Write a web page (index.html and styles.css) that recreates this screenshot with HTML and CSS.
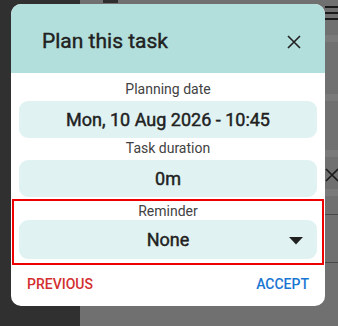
FILE: index.html
```html
<!DOCTYPE html>
<html lang="en">
<head>
    <meta charset="UTF-8">
    <meta name="viewport" content="width=device-width, initial-scale=1.0">
    <title>Plan this task</title>
    <link rel="stylesheet" href="styles.css">
</head>
<body>

<!-- Backdrop (dimmed app behind the dialog) -->
<div class="backdrop">
    <div class="side"></div>
    <div class="main">
        <div class="tab-mark"></div>
        <div class="menu-icon">
            <span></span><span></span><span></span>
        </div>
        <div class="band band-1"></div>
        <div class="band band-2"></div>
        <div class="band band-3"></div>
        <div class="band band-4"></div>
        <div class="line line-1"></div>
        <div class="line line-2"></div>
        <svg class="bg-close" width="14" height="14" viewBox="0 0 14 14">
            <path d="M1 1L13 13M13 1L1 13" stroke="#1a1a1a" stroke-width="1.6"/>
        </svg>
    </div>
</div>

<!-- Dialog -->
<div class="dialog">
    <div class="dialog-header">
        <h2>Plan this task</h2>
        <svg class="close" width="14" height="14" viewBox="0 0 14 14">
            <path d="M1 1L13 13M13 1L1 13" stroke="#212121" stroke-width="1.6"/>
        </svg>
    </div>

    <div class="dialog-body">
        <div class="field">
            <div class="label">Planning date</div>
            <div class="value">Mon, 10 Aug 2026 - 10:45</div>
        </div>

        <div class="field">
            <div class="label">Task duration</div>
            <div class="value">0m</div>
        </div>

        <div class="field highlight">
            <div class="label">Reminder</div>
            <div class="value select">
                None
                <svg class="caret" width="14" height="8" viewBox="0 0 14 8">
                    <path d="M0 0H14L7 7.5Z" fill="#212121"/>
                </svg>
            </div>
        </div>
    </div>

    <div class="dialog-actions">
        <span class="action red">PREVIOUS</span>
        <span class="action blue">ACCEPT</span>
    </div>
</div>

</body>
</html>
```

FILE: styles.css
```css
body {
    font-family: Roboto, "Liberation Sans", sans-serif;
    margin: 0;
    padding: 0;
    width: 338px;
    height: 326px;
    overflow: hidden;
    position: relative;
}

.backdrop {
    display: flex;
    height: 326px;
}

.side {
    width: 80px;
    background-color: #303030;
}

.main {
    flex: 1;
    background-color: #707070;
    position: relative;
}

.tab-mark {
    position: absolute;
    left: 23px;
    top: 0;
    width: 15px;
    height: 3px;
    background-color: #2e2e2e;
}

.menu-icon {
    position: absolute;
    left: 245px;
    top: 6px;
    display: flex;
    flex-direction: column;
    gap: 4px;
}

.menu-icon span {
    display: block;
    width: 14px;
    height: 2px;
    background-color: #1a1a1a;
}

.band {
    position: absolute;
    left: 0;
    right: 0;
    height: 7px;
    background-color: #7a7a7a;
}

.band-1 { top: 35px; }
.band-2 { top: 94px; }
.band-3 { top: 150px; }
.band-4 { top: 189px; }

.line {
    position: absolute;
    left: 0;
    right: 0;
    height: 1px;
    background-color: #4a4a4a;
}

.line-1 { top: 214px; }
.line-2 { top: 262px; }

.bg-close {
    position: absolute;
    left: 245px;
    top: 168px;
}

/* Dialog */
.dialog {
    position: absolute;
    left: 11px;
    top: 4px;
    width: 314px;
    height: 302px;
    background-color: #fff;
    border-radius: 10px;
    overflow: hidden;
    display: flex;
    flex-direction: column;
}

.dialog-header {
    height: 69px;
    background-color: #b2dfdb;
    display: flex;
    align-items: center;
    justify-content: space-between;
    padding: 0 24px 0 31px;
}

.dialog-header h2 {
    margin: 0;
    font-size: 21px;
    font-weight: 400;
    -webkit-text-stroke: 0.4px #212121;
    color: #212121;
    padding-top: 4px;
}

.close {
    margin-top: 6px;
}

.dialog-body {
    padding: 8px 1px 0 1px;
    display: flex;
    flex-direction: column;
    gap: 2px;
}

.field {
    padding: 0 7px;
}

.label {
    text-align: center;
    font-size: 14px;
    color: #424242;
    line-height: 16px;
    margin-bottom: 4px;
}

.value {
    background-color: #e0f2f1;
    border-radius: 9px;
    height: 37px;
    line-height: 37px;
    text-align: center;
    font-size: 18px;
    font-weight: 400;
    -webkit-text-stroke: 0.45px #212121;
    color: #212121;
    position: relative;
}

.field.highlight {
    border: 2px solid #ee0000;
    padding: 2px 5px 4px 5px;
}

.field.highlight .label {
    margin-bottom: 1px;
}

.value.select {
    height: 39px;
    line-height: 39px;
}

.caret {
    position: absolute;
    right: 14px;
    top: 17px;
}

.dialog-actions {
    display: flex;
    justify-content: space-between;
    padding: 11px 16px 0 16px;
}

.action {
    font-size: 14px;
    font-weight: 500;
}

.action.red {
    color: #d32f2f;
}

.action.blue {
    color: #1976d2;
}
```
